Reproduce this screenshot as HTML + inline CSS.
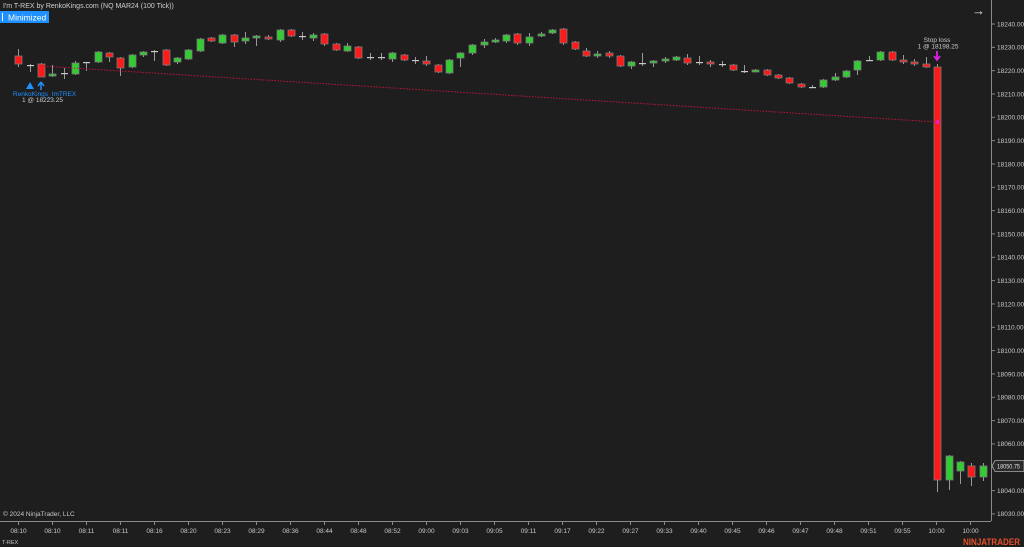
<!DOCTYPE html>
<html><head><meta charset="utf-8"><style>
html,body{margin:0;padding:0;background:#1e1e1e;width:1024px;height:547px;overflow:hidden;font-family:"Liberation Sans",sans-serif}
svg{position:absolute;left:0;top:0}
</style></head><body>
<svg id="c" width="1024" height="547" xmlns="http://www.w3.org/2000/svg" font-family="Liberation Sans, sans-serif">
<rect width="1024" height="547" fill="#1e1e1e"/>
<text x="3" y="8" font-size="7" fill="#d0d0d0">I'm T-REX by RenkoKings.com (NQ MAR24 (100 Tick))</text>
<rect x="0" y="11" width="49" height="12" fill="#1e90ff"/>
<rect x="2" y="13" width="1" height="8" fill="#fff"/>
<text x="8" y="20.5" font-size="8.5" fill="#fff">Minimized</text>
<text x="972" y="15" font-size="13" fill="#e0e0e0">→</text>
<line x1="991.5" y1="0" x2="991.5" y2="521" stroke="#8a8a8a" stroke-width="1"/>
<line x1="0" y1="521.5" x2="991" y2="521.5" stroke="#8a8a8a" stroke-width="1"/>
<g id="ax"></g>
<g id="cd"></g>
<line x1="41" y1="66" x2="937" y2="122" stroke="#c0143c" stroke-width="1" stroke-dasharray="1.5,1.5"/>
<polygon points="935,122 939,119 939,125" fill="#e020e0"/>
<polygon points="30,82 26,89 34,89" fill="#1e90ff"/>
<path d="M41,82 L38,86 M41,82 L44,86 M41,82 L41,90" stroke="#1e90ff" stroke-width="1.5" fill="none"/>
<text x="13" y="96" font-size="6.5" fill="#1e90ff">RenkoKings_ImTREX</text>
<text x="22" y="102" font-size="6.5" fill="#c8c8c8">1 @ 18223.25</text>
<path d="M937,51 L937,59 M934,56 L937,60 L940,56" stroke="#e020e0" stroke-width="1.8" fill="none"/>
<text x="937" y="42" font-size="6.5" fill="#c8c8c8" text-anchor="middle">Stop loss</text>
<text x="938" y="48.5" font-size="6.5" fill="#c8c8c8" text-anchor="middle">1 @ 18198.25</text>
<polygon points="992,466 995,460.5 1024,460.5 1024,471.5 995,471.5" fill="#2a2a2a" stroke="#aaa" stroke-width="0.8"/>
<text x="997" y="468.5" font-size="6.5" fill="#e0e0e0" textLength="23" lengthAdjust="spacingAndGlyphs">18050.75</text>
<text x="3" y="516" font-size="6.5" fill="#c8c8c8">© 2024 NinjaTrader, LLC</text>
<text x="2" y="544" font-size="5.5" fill="#c8c8c8">T-REX</text>
<text x="963" y="545" font-size="9" font-weight="bold" fill="#e4502a" textLength="57" lengthAdjust="spacingAndGlyphs">NINJATRADER</text>
</svg>
<script>
var NS="http://www.w3.org/2000/svg";
function el(p,t,a,txt){var e=document.createElementNS(NS,t);for(var k in a)e.setAttribute(k,a[k]);if(txt)e.textContent=txt;p.appendChild(e);return e;}
var ax=document.getElementById('ax');
for(var i=0;i<22;i++){var p=18240-i*10;var y=24+(18240-p)*2.333;
el(ax,'line',{x1:991,y1:y,x2:995,y2:y,stroke:'#8a8a8a'});
if(p!==18050)el(ax,'text',{x:997,y:y+2.3,'font-size':6.5,fill:'#c8c8c8'},p.toFixed(2));}
var t="08:10,08:10,08:11,08:11,08:16,08:20,08:23,08:29,08:36,08:44,08:48,08:52,09:00,09:03,09:05,09:11,09:17,09:22,09:27,09:33,09:40,09:45,09:46,09:47,09:48,09:51,09:55,10:00,10:00".split(',');
for(var i=0;i<t.length;i++){var x=18.5+i*34;el(ax,'line',{x1:x,y1:521,x2:x,y2:525,stroke:'#8a8a8a'});el(ax,'text',{x:x,y:533,'font-size':6.5,fill:'#c8c8c8','text-anchor':'middle'},t[i]);}
var C=[[18,'r',56,64,49,67],[30,'d',65,66,64,72],[41,'r',64,77,63,77],[52,'g',74,76,65,77],[64,'d',73,74,68,79],[75,'g',63,74,61,75],[86,'d',62,63,62,71],[98,'g',52,62,51,63],[109,'r',53,57,52,62],[120,'r',58,68,57,76],[132,'g',55,67,54,68],[143,'g',52,55,51,57],[154,'d',51,52,50,61],[166,'r',50,65,49,66],[177,'g',58,62,57,64],[188,'g',50,59,49,60],[200,'g',39,51,38,52],[211,'r',38,41,37,42],[222,'g',35,43,34,44],[234,'r',35,42,34,47],[245,'g',38,41,32,44],[256,'g',36,38,35,46],[268,'r',37,38,35,40],[280,'g',30,40,29,42],[291,'r',30,36,29,37],
[302,'d',36,37,32,40],[313,'g',35,38,33,41],[324,'r',34,44,33,46],[336,'r',44,50,43,51],[347,'g',46,51,43,52],[358,'r',47,58,46,59],[370,'d',57,58,53,60],[381,'d',57,58,53,60],[392,'g',53,59,52,62],[404,'r',55,60,54,61],[415,'d',60,61,57,64],[426,'r',61,64,56,66],[438,'r',65,72,64,73],[449,'g',60,73,59,74],[460,'g',53,58,52,67],[472,'g',45,53,44,55],[484,'g',42,45,39,48],[495,'g',40,42,38,43],[506,'g',35,41,34,43],[517,'r',34,43,33,45],[529,'g',37,43,33,46],[541,'g',34,36,32,37],[552,'g',30,33,29,34],[563,'r',29,43,28,45],[575,'r',42,49,41,50],[586,'r',51,56,48,57],[597,'g',54,56,51,58],[609,'r',53,56,51,58],
[620,'r',56,66,55,67],[631,'g',62,66,61,69],[642,'d',63,64,53,66],[653,'g',61,63,60,67],[665,'g',59,61,57,63],[676,'g',57,60,56,61],[687,'r',58,63,54,65],[699,'d',62,63,56,65],[710,'r',62,64,60,67],[722,'d',64,65,61,67],[733,'r',65,70,64,71],[744,'d',71,72,65,73],[755,'g',70,71,69,72],[767,'r',70,75,69,76],[778,'r',75,78,74,79],[789,'r',78,83,77,84],[801,'r',84,87,83,88],[812,'d',87,88,85,88],[823,'g',80,87,79,88],[835,'g',77,80,73,81],[846,'g',71,77,70,78],[857,'g',61,70,60,75],[869,'d',60,61,56,61],[880,'g',52,60,51,61],[892,'r',52,60,51,61],[903,'r',60,62,55,64],[914,'r',62,64,59,66],[926,'r',64,67,57,68],[937,'r',67,480,64,492],[949,'g',456,480,455,490],[960,'g',462,471,461,484],[971,'r',466,477,463,486],[983,'g',466,477,463,481]];
var cd=document.getElementById('cd');
C.forEach(function(c){var x=c[0];
el(cd,'line',{x1:x+0.5,y1:c[4],x2:x+0.5,y2:c[5],stroke:'#9a9a9a','stroke-width':1});
var col=c[1]=='g'?'#33cc33':c[1]=='r'?'#ff1a1a':'#c8c8c8';
if(c[1]=='d'){el(cd,'rect',{x:x-3,y:c[2],width:7,height:1.2,fill:'#c8c8c8'});}
else el(cd,'rect',{x:x-3,y:c[2],width:7,height:Math.max(c[3]-c[2],2),fill:col,stroke:'#7a7a7a','stroke-width':0.8});
});
</script>
</body></html>
